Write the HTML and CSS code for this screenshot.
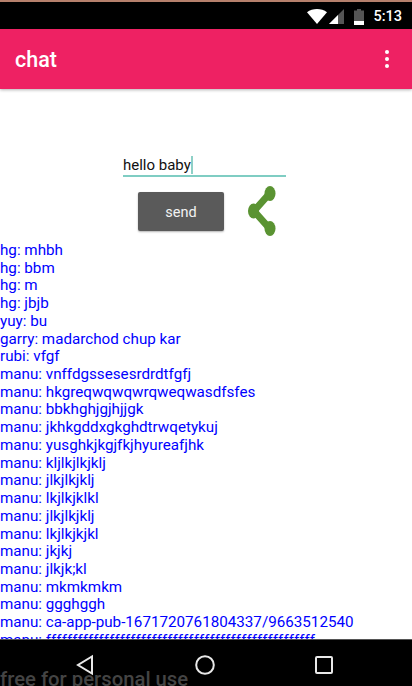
FILE: index.html
```html
<!DOCTYPE html>
<html lang="en">
<head>
<meta charset="utf-8">
<title>chat</title>
<link rel="stylesheet" href="styles.css">
</head>
<body>
<div class="phone">
  <div class="statusbar">
    <svg class="ic-wifi" width="20" height="15" viewBox="0 0 20 15"><path d="M0 3.2C5.5-1 14.500-1 20 3.200L10 15z" fill="#fff"/></svg>
    <svg class="ic-signal" width="15" height="15" viewBox="0 0 15 15"><path d="M15 0V15H0z" fill="#555"/><path d="M9 6V15H0z" fill="#fff"/></svg>
    <svg class="ic-battery" width="10" height="16" viewBox="0 0 10 16"><path d="M3 0h4v1.500h3V16H0V1.500h3z" fill="#555"/><rect y="12" width="10" height="4" fill="#fff"/></svg>
    <span class="clock">5:13</span>
  </div>
  <header class="appbar">
    <span class="title">chat</span>
    <span class="menu"><i></i><i></i><i></i></span>
  </header>
  <main class="content">
    <div class="composer">
      <div class="field">hello baby<span class="cursor"></span></div>
      <div class="actions">
        <button class="send" type="button">send</button>
        <svg class="share" width="30" height="50" viewBox="0 0 30 50"><path d="M23 7 7 25l16 18" fill="none" stroke="#5a9332" stroke-width="7"/><ellipse cx="23" cy="7.500" rx="5.500" ry="7.500" fill="#5a9332"/><ellipse cx="6.500" cy="25" rx="5.500" ry="7.500" fill="#5a9332"/><ellipse cx="23" cy="42.500" rx="5.500" ry="7.500" fill="#5a9332"/></svg>
      </div>
    </div>
    <ul class="messages">
      <li>hg: mhbh</li>
      <li>hg: bbm</li>
      <li>hg: m</li>
      <li>hg: jbjb</li>
      <li>yuy: bu</li>
      <li>garry: madarchod chup kar</li>
      <li>rubi: vfgf</li>
      <li>manu: vnffdgssesesrdrdtfgfj</li>
      <li>manu: hkgreqwqwqwrqweqwasdfsfes</li>
      <li>manu: bbkhghjgjhjjgk</li>
      <li>manu: jkhkgddxgkghdtrwqetykuj</li>
      <li>manu: yusghkjkgjfkjhyureafjhk</li>
      <li>manu: kljlkjlkjklj</li>
      <li>manu: jlkjlkjklj</li>
      <li>manu: lkjlkjklkl</li>
      <li>manu: jlkjlkjklj</li>
      <li>manu: lkjlkjkjkl</li>
      <li>manu: jkjkj</li>
      <li>manu: jlkjk;kl</li>
      <li>manu: mkmkmkm</li>
      <li>manu: ggghggh</li>
      <li>manu: ca-app-pub-1671720761804337/9663512540</li>
      <li>manu: fffffffffffffffffffffffffffffffffffffffffffffffffff</li>
    </ul>
  </main>
  <nav class="navbar">
    <svg class="nav-ic" width="20" height="22" viewBox="0 0 20 22"><path d="M17 2.500V19.500L3 11z" fill="none" stroke="#e8e8e8" stroke-width="2"/></svg>
    <svg class="nav-ic" width="20" height="20" viewBox="0 0 20 20"><circle cx="10" cy="10" r="8.800" fill="none" stroke="#e8e8e8" stroke-width="2"/></svg>
    <svg class="nav-ic" width="18" height="18" viewBox="0 0 18 18"><rect x="1" y="1" width="16" height="16" rx="1" fill="none" stroke="#e8e8e8" stroke-width="2"/></svg>
    <span class="watermark">free for personal use</span>
  </nav>
</div>
</body>
</html>
```
FILE: styles.css
```css
* { box-sizing: border-box; }
html, body { margin: 0; padding: 0; }
body { font-family: Roboto, sans-serif; background: #fff; }
.phone { position: relative; width: 412px; height: 686px; overflow: hidden; display: flex; flex-direction: column; }
.statusbar { height: 29px; flex: none; background: #000; border-top: 2px solid #b5806c; display: flex; align-items: center; justify-content: flex-end; padding-right: 10px; color: #fff; }
.ic-wifi { margin-right: 2px; margin-top: 2px; }
.ic-signal { margin-right: 10px; margin-top: 2px; }
.ic-battery { margin-right: 9px; margin-top: 2px; }
.clock { font-size: 14.500px; font-weight: 500; margin-top: 2px; }
.appbar { height: 60px; flex: none; background: #ee2163; display: flex; align-items: center; justify-content: space-between; padding: 1px 23px 0 15px; box-shadow: 0 1px 3px rgba(0,0,0,.3); position: relative; z-index: 1; color: #fff; }
.title { font-size: 21.500px; font-weight: 500; }
.menu { display: flex; flex-direction: column; gap: 3px; margin-top: -2px; }
.menu i { display: block; width: 4px; height: 4px; border-radius: 50%; background: #fff; }
.content { flex: 1; min-height: 0; overflow: hidden; }
.composer { display: flex; flex-direction: column; align-items: flex-start; padding: 65px 0 0 123px; }
.field { width: 163px; height: 23px; border-bottom: 2px solid #7fcdc3; font-size: 15px; line-height: 20px; color: #111; display: flex; align-items: center; }
.cursor { width: 2px; height: 18px; background: #8ed0c7; }
.actions { display: flex; align-items: flex-start; margin: 15px 0 0 15px; }
.send { width: 86px; height: 39px; border: 0; border-radius: 2px; background: #5a5a5a; color: #f2f2f2; font: 400 14.500px Roboto, sans-serif; box-shadow: 0 1px 2px rgba(0,0,0,.3); padding: 2px 0 0; }
.share { margin: -6px 0 0 23px; }
.messages { list-style: none; margin: 6px 0 0; padding: 0; font-size: 15.200px; line-height: 17.720px; color: #0000ff; }
.navbar { height: 47px; flex: none; background: #000; display: flex; align-items: center; position: relative; padding: 4px 0 0 75px; gap: 100px; border-top: 1px solid #555; }
.watermark { position: absolute; left: 0; top: 27px; font-size: 20.300px; line-height: 24px; color: #444; white-space: nowrap; font-weight: 500; }
```
